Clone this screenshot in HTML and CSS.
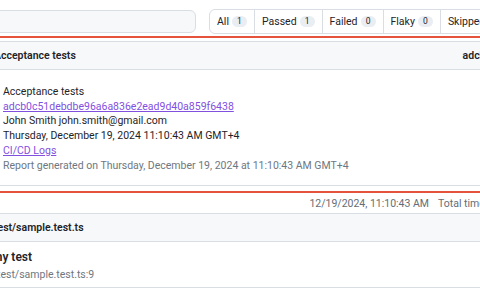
FILE: index.html
```html
<!doctype html>
<html lang="en">
  <head>
    <meta charset="UTF-8" />
    <meta name="viewport" content="width=device-width, initial-scale=1" />
    <title>Playwright Test Report</title>
    <link rel="stylesheet" href="styles.css">
  </head>
  <body>
    <div class="report">
      <div class="toolbar">
        <input class="search" type="search" value="" />
        <nav class="filters">
          <a class="filter">All <span class="counter">1</span></a>
          <a class="filter">Passed <span class="counter">1</span></a>
          <a class="filter">Failed <span class="counter">0</span></a>
          <a class="filter">Flaky <span class="counter">0</span></a>
          <a class="filter">Skipped <span class="counter">0</span></a>
        </nav>
      </div>

      <div class="divider"></div>

      <div class="chip metadata">
        <div class="chip-header">
          <span>Acceptance tests</span>
          <span class="chip-aside">adcb0c5</span>
        </div>
        <div class="chip-body">
          <div>Acceptance tests</div>
          <div><a href="#">adcb0c51debdbe96a6a836e2ead9d40a859f6438</a></div>
          <div>John Smith john.smith@gmail.com</div>
          <div>Thursday, December 19, 2024 11:10:43 AM GMT+4</div>
          <div><a href="#">CI/CD Logs</a></div>
          <div class="muted">Report generated on Thursday, December 19, 2024 at 11:10:43 AM GMT+4</div>
        </div>
      </div>

      <div class="divider after"></div>

      <div class="summary">
        <span>12/19/2024, 11:10:43 AM</span>
        <span>Total time: 1.2s</span>
      </div>

      <div class="chip">
        <div class="chip-header">
          <span>test/sample.test.ts</span>
        </div>
        <div class="test-row">
          <div class="test-title">my test</div>
          <div class="test-location">test/sample.test.ts:9</div>
        </div>
      </div>
    </div>
  </body>
</html>
```

FILE: styles.css
```css
html,
body {
  margin: 0;
  overflow: hidden;
  background: #fff;
}
body {
  font-family: Roboto, "Noto Sans", sans-serif;
  font-size: 10.5px;
  color: #1f2328;
}
.report {
  width: 540px;
  margin-left: -16px;
  padding-top: 10px;
}
.toolbar {
  display: flex;
  align-items: center;
  gap: 13px;
  height: 23px;
}
.search {
  flex-shrink: 0;
  box-sizing: border-box;
  width: 212px;
  height: 23px;
  border: 1px solid #d8dee4;
  border-radius: 6px;
  background: #f6f8fa;
  outline: none;
}
.filters {
  flex-shrink: 0;
  display: flex;
  height: 23px;
  border: 1px solid #d8dee4;
  border-radius: 6px;
  overflow: hidden;
}
.filter {
  display: flex;
  align-items: center;
  gap: 3px;
  padding: 0 7px;
  border-right: 1px solid #d8dee4;
  color: #1f2328;
  font-size: 10.5px;
  white-space: nowrap;
}
.counter {
  display: inline-block;
  min-width: 13px;
  padding: 0 1px;
  line-height: 11px;
  border-radius: 6px;
  background: #eaeef2;
  font-size: 8.5px;
  text-align: center;
}
.divider {
  height: 2px;
  margin: 3px 0 3px 16px;
  background: #e5533d;
}
.divider.after {
  margin: 5px 0 0 16px;
}
.chip {
  border: 1px solid #d8dee4;
  border-radius: 6px;
}
.chip-header {
  display: flex;
  justify-content: space-between;
  align-items: center;
  height: 27px;
  padding: 0 20px 0 9px;
  background: #f6f8fa;
  border-bottom: 1px solid #d8dee4;
  font-size: 10.5px;
  font-weight: 600;
  border-radius: 6px 6px 0 0;
}
.chip-body {
  padding: 15px 18px 12px;
  line-height: 14.7px;
}
.chip-body a {
  color: #8250df;
}
.muted {
  color: #6e7781;
}
.summary {
  display: flex;
  justify-content: flex-end;
  gap: 9px;
  height: 20px;
  padding: 0 14px 0 9px;
  align-items: center;
  color: #656d76;
}
.test-row {
  padding: 6px 7px 3px;
}
.test-title {
  font-size: 12px;
  font-weight: 600;
  line-height: 18px;
}
.test-location {
  padding-left: 5px;
  line-height: 18px;
  color: #6e7781;
}
```
